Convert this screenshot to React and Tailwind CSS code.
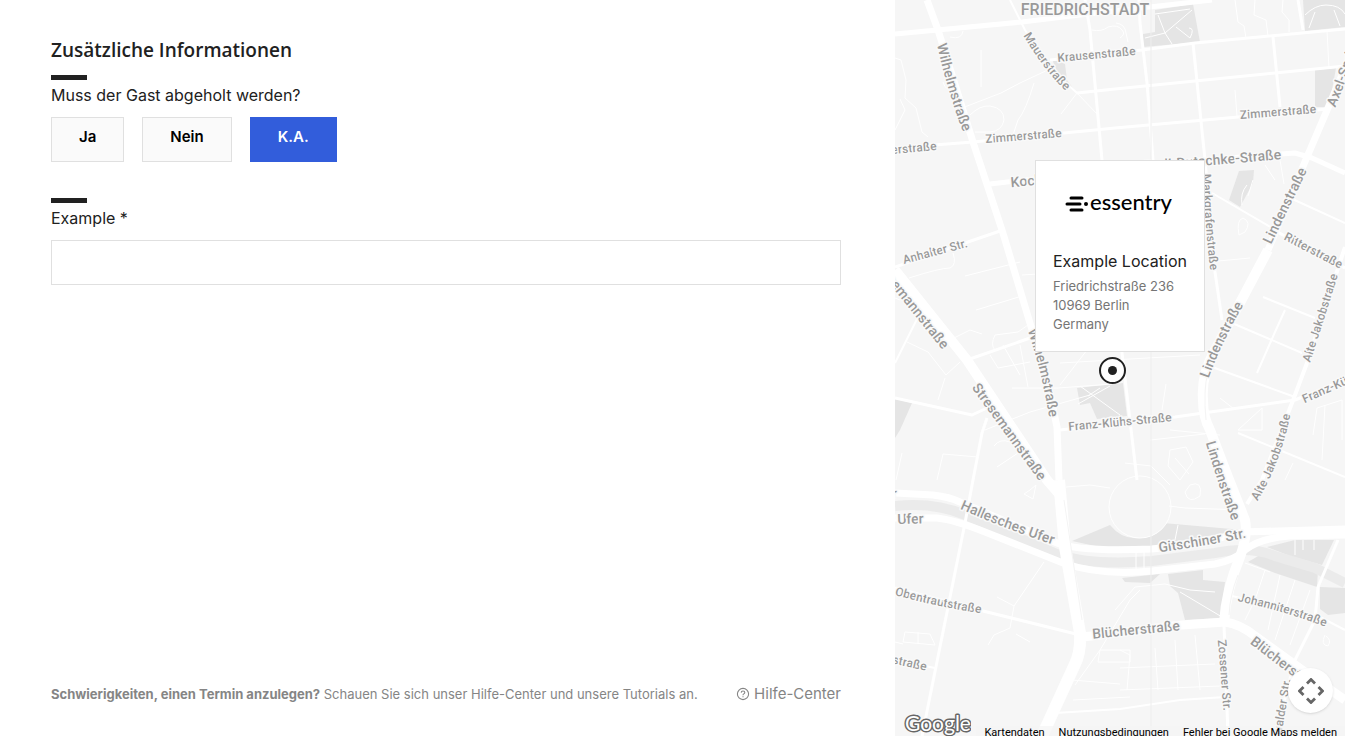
import { useState } from 'react';

const PARKS = [
  'M1155 10 L1193 4 L1200 42 L1143 47 L1143 34 L1155 32 Z',
  'M1303 0 H1345 V27 L1305 31 Z',
  'M1315 70 L1336 68 L1329 107 L1315 107 Z',
  'M1239 171 L1254 170 L1253 183 L1240 207 L1229 200 Z',
  'M1052 59 L1065 64 L1067 80 L1075 91 L1057 72 Z',
  'M1077 388 L1123 383 L1127 416 L1097 419 L1090 403 L1080 405 Z',
  'M895 399 L912 403 L900 430 L895 438 Z',
  'M1072 541 L1110 525 Q1122 540 1140 538 Q1155 536 1163 523 L1243 530 L1150 546 L1100 547 Z',
  'M1168 574 L1203 570 V580 L1225 582 L1221 618 L1185 620 L1178 593 L1170 586 Z',
  'M1267 547 L1295 540 H1334 L1322 565 L1290 556 Z',
  'M1248 562 L1265 552 L1318 570 L1317 587 L1275 573 Z',
  'M1320 587 L1345 588 V613 L1328 615 L1320 609 Z',
  'M1122 578 L1160 574 L1150 583 L1125 582 Z',
];

// [width, path]
const ROADS = [
  [1, 'M895 58 L901 60 L906 80 L905 98 L916 108 L922 132 L928 137'],
  [1, 'M981 50 V87 M962 108 L1001 93 L1020 83 L1052 68 M1034 83 Q1026 110 1018 120 L1012 138'],
  [1, 'M970 115 Q980 105 990 106 Q1004 108 1004 120 Q1002 131 990 132 L975 132'],
  [1, 'M900 99 L905 110 L895 130 M943 82 Q946 92 952 88 M950 37 Q962 40 963 31'],
  [1, 'M1092 30 Q1102 32 1108 27 Q1118 24 1122 30 Q1126 34 1120 38'],
  [1, 'M1077 93 L1061 114 M1077 93 L1098 115'],
  [1, 'M1235 0 L1238 22 L1244 26 L1246 38 M1255 0 L1254 15 L1266 20 L1268 36 M1283 0 L1282 12 L1289 20 V32'],
  [1, 'M1235 90 L1237 116 M1327 31 L1329 68 M1116 23 Q1125 24 1126 33 L1128 42'],
  [1, 'M1155 14 L1190 9 M1145 38 L1165 33 L1192 10 M1165 33 L1172 44 M1165 33 L1158 15 M1176 27 L1190 38 Q1195 28 1189 28'],
  [1, 'M1305 15 Q1315 5 1326 5 Q1340 5 1345 14 M1309 28 L1315 12 M1340 26 L1334 10'],
  [1, 'M1247 185 Q1240 193 1242 205 M1253 180 L1248 196 M1265 165 L1275 180 M1280 160 L1284 184'],
  [1, 'M1239 235 Q1236 220 1243 218 Q1252 222 1245 232 Z'],
  [1, 'M909 278 Q940 268 950 268 Q957 265 953 253 M965 276 L1020 262 M976 310 L1022 296'],
  [1, 'M950 340 L970 330 L982 334 M995 350 Q990 345 995 335 L1018 332 L1028 325 M990 355 L998 368 L1030 362'],
  [1, 'M907 342 L928 352 L946 375 L960 362 M945 378 L938 400 M985 430 L1030 412 L1090 395'],
  [1, 'M1003 345 L1020 375 M1020 345 L1028 387 M1012 388 L1058 388 L1112 384'],
  [1, 'M937 480 L943 454 L978 457 M994 446 Q1000 438 1010 442 M997 467 L1030 445 M902 453 L896 480'],
  [1, 'M1060 363 L1200 355 M1060 385 L1087 350 M1166 384 L1162 410 M1150 440 L1205 434 M1170 430 L1220 435'],
  [1, 'M1088 396 L1100 388 M1080 386 L1120 415 M1078 404 L1110 386'],
  [1, 'M1238 430 L1262 408 V430 Z M1220 398 L1234 409 M1285 480 L1293 463 M1313 435 L1317 408 L1342 400 V440 M1325 405 L1322 460'],
  [1, 'M1170 450 L1186 447 L1193 462 L1180 480 L1168 466 Z M1175 458 L1189 474 M1190 485 Q1203 480 1200 496 Q1188 505 1185 492 Z'],
  [1, 'M1066 487 L1090 485 L1110 488 M1169 506 L1185 508 L1243 510 M1125 463 L1151 466 L1170 485'],
  [1, 'M1030 490 L1036 485 L1033 499 L1024 494 Z M1044 562 L1014 606 L1010 628 L994 635 L988 645 M997 597 L1014 606 M1016 634 L1030 642'],
  [1, 'M905 632 L930 634 L935 645 L903 642 Z M918 632 V644 M895 642 L903 644'],
  [1, 'M1075 685 L1100 650 L1130 600 L1140 590 M1072 680 L1120 684 M1073 700 L1130 697 M1100 650 H1130 V662 H1098 Z'],
  [1, 'M1120 650 L1130 655 L1127 690 M1155 648 L1158 690 M1175 640 L1178 690 M1195 635 L1200 690 M1120 668 L1215 664 M1120 690 L1220 686'],
  [1, 'M1115 610 L1135 587 L1165 584 L1190 590 L1215 592 M1180 592 L1222 617'],
  [1, 'M1265 570 L1255 600 L1245 620 M1280 575 L1268 630 M1295 580 L1275 640 M1310 590 L1290 645 M1245 563 L1270 572'],
  [1, 'M1303 540 V550 M1314 540 V550 M1295 540 V555 M1325 635 Q1320 645 1328 646 Q1332 640 1326 636'],
  [1, 'M1136 546 V570 M1144 546 V570 M1175 540 L1178 525'],
  [2, 'M1010 0 L1025 30 L1050 68 L1077 93'],
  [3, 'M1085 0 L1090 30 L1102 160 L1122 353 L1137 480'],
  [3, 'M1139 0 L1140 23 L1147 83 L1153 160'],
  [3, 'M1193 43 L1205 160 L1215 272 L1222 320'],
  [3, 'M1273 37 L1280 107'],
  [3, 'M1298 0 L1303 30'],
  [5, 'M895 34 L1022 22 L1105 12 L1212 0'],
  [3, 'M1050 60 L1142 50 L1195 43 L1345 29'],
  [3, 'M1077 93 L1115 89 L1275 73 L1345 66'],
  [3, 'M895 148 L973 142 L1115 128 L1328 109'],
  [5, 'M990 184 L1200 160 L1295 153 L1312 158 L1345 173'],
  [3, 'M895 267 L1000 231'],
  [1, 'M1022 275 L1100 270 M1208 262 L1250 258 M900 300 L895 298'],
  [2, 'M1212 193 L1272 228 M1288 197 L1345 223'],
  [3, 'M895 398 L972 415 L987 408 M1033 337 L967 360'],
  [2, 'M920 313 L895 363'],
  [3, 'M987 418 L982 433 L973 480 L965 523 L922 736'],
  [3, 'M1270 228 L1345 268'],
  [4, 'M1345 247 L1307 363 L1292 403 L1262 480 L1247 504'],
  [3, 'M1060 430 L1175 417 L1295 400 L1345 380'],
  [2, 'M1212 367 L1295 397 M1232 323 L1302 353 M1263 297 L1315 318 M1285 310 L1275 332 L1257 373'],
  [2, 'M1238 433 L1345 477'],
  [3, 'M895 588 L983 611 L1080 635'],
  [2, 'M895 660 L935 668 M1055 713 L1120 709 L1180 700 L1225 697'],
  [3, 'M1224 625 L1228 736'],
  [3, 'M1338 540 L1318 587 L1315 620 L1295 660 L1275 736'],
  [2, 'M1228 595 L1320 617 L1345 630'],
  [7, 'M927 0 L938 30 L973 142 L1002 230 L1030 323 L1047 380 L1057 427 L1059 480'],
  [12, 'M1059 480 L1065 547 L1080 633 Q1081 652 1075 664 L1042 736'],
  [10, 'M895 270 L967 360 L1047 480 L1060 495'],
  [7, 'M1345 68 L1307 157 L1268 250'],
  [10, 'M1268 250 L1215 350 Q1201 375 1203 400 Q1203 417 1210 430 L1228 477 L1245 520 Q1248 535 1240 557 Q1226 590 1224 623'],
  [7, 'M895 493 L933 495 Q950 497 960 502 L1057 543 Q1080 552 1152 549 Q1200 545 1242 532 L1345 529'],
  [7, 'M895 518 H937 Q955 520 985 532 L1063 563 Q1100 576 1152 571 L1215 564 Q1235 560 1245 550 Q1260 538 1290 536 L1345 535'],
  [9, 'M1083 637 L1182 625 L1225 622 Q1240 624 1255 636 L1302 670 L1345 700'],
];

const LABELS = [
  ['Wilhelmstraße', 14, 'M939 30 Q951 90 973 143'],
  ['Mauerstraße', 12, 'M1021 23 Q1045 68 1077 96'],
  ['Krausenstraße', 12, 'M1046 59 L1147 50'],
  ['Zimmerstraße', 12, 'M974 140 L1073 132'],
  ['Zimmerstraße', 12, 'M1229 116 L1327 108'],
  ['Zimmerstraße', 12, 'M850 154 L947 145'],
  ['Kochstraße', 14, 'M1001 183 L1092 175'],
  ['Rudi-Dutschke-Straße', 14, 'M1131 167 L1294 153'],
  ['Markgrafenstraße', 12, 'M1206 160 Q1208 220 1216 284'],
  ['Lindenstraße', 14, 'M1261 254 L1308 157'],
  ['Axel-Springer-Straße', 14, 'M1326 116 Q1345 75 1375 -30'],
  ['Ritterstraße', 12, 'M1276 231 L1351 270'],
  ['Alte Jakobstraße', 12, 'M1302 374 Q1320 320 1338 261'],
  ['Anhalter Str.', 12, 'M892 263 L978 240'],
  ['Stresemannstraße', 14, 'M867 248 L953 355'],
  ['Stresemannstraße', 14, 'M967 373 L1052 490'],
  ['Wilhelmstraße', 14, 'M1028 316 Q1048 370 1056 430'],
  ['Franz-Klühs-Straße', 12, 'M1056 428 L1184 416'],
  ['Lindenstraße', 14, 'M1200 389 Q1213 345 1246 291'],
  ['Lindenstraße', 14, 'M1207 429 Q1223 485 1241 531'],
  ['Franz-Künstler-Straße', 12, 'M1293 404 L1421 347'],
  ['Alte Jakobstraße', 12, 'M1247 510 Q1278 465 1289 401'],
  ['Hallesches Ufer', 14, 'M950 499 Q1005 524 1067 544'],
  ['Hallesches Ufer', 14, 'M786 494 L909 493'],
  ['Tempelhofer Ufer', 14, 'M804 522 L934 518'],
  ['Obentrautstraße', 12, 'M885 588 Q935 603 993 611'],
  ['Hagelberger straße', 12, 'M820 643 L932 668'],
  ['Gitschiner Str.', 14, 'M1146 549 Q1202 542 1258 530'],
  ['Blücherstraße', 14, 'M1080 635 L1192 624'],
  ['Johanniterstraße', 12, 'M1227 595 Q1285 606 1337 627'],
  ['Blücherstraße', 14, 'M1243 632 L1332 700'],
  ['Zossener Str.', 12, 'M1221 630 Q1225 675 1228 720'],
  ['Baerwalder Str.', 12, 'M1272 765 L1288 673'],
];

const CityMap = () => (
  <svg
    viewBox="895 0 450 736"
    preserveAspectRatio="xMidYMin slice"
    className="absolute inset-0 h-full w-full"
    aria-hidden="true"
  >
    <rect x="595" y="0" width="1050" height="736" fill="#f6f6f6" />
    {PARKS.map((d) => (
      <path key={d} d={d} fill="#e5e5e5" />
    ))}
    <circle cx="1140" cy="507" r="31" fill="#f6f6f6" stroke="#fff" />
    {/* Landwehrkanal */}
    <path
      d="M895 506 Q935 502 965 515 L1057 554 Q1090 566 1152 561 L1215 553 Q1250 546 1275 556 L1315 568 L1345 583"
      fill="none"
      stroke="#ebebeb"
      strokeWidth="10"
    />
    {ROADS.map(([width, d]) => (
      <path key={d} d={d} fill="none" stroke="#fff" strokeWidth={width} strokeLinejoin="round" />
    ))}
    <path
      d="M1064 500 L1071 547 L1082 620 M1208 372 Q1203 390 1206 420 M1238 575 Q1230 595 1229 615"
      fill="none"
      stroke="#f4f4f4"
    />
    <path d="M1151 0 V736" stroke="#eee" />

    <g
      className="font-['Roboto',sans-serif] font-medium"
      fill="#999"
      stroke="#f9f9f9"
      strokeWidth="3"
      strokeLinejoin="round"
      paintOrder="stroke"
      textAnchor="middle"
    >
      <text x="1085" y="15" fontSize="16">
        FRIEDRICHSTADT
      </text>
      {LABELS.map(([name, size, d], i) => (
        <g key={i}>
          <path id={`street-${i}`} d={d} fill="none" stroke="none" />
          <text fontSize={size} dy={size === 14 ? 5 : 4}>
            <textPath href={`#street-${i}`} startOffset="50%">
              {name}
            </textPath>
          </text>
        </g>
      ))}
    </g>
  </svg>
);

const EssentryLogo = () => (
  <svg width="112" height="28" viewBox="0 0 112 28" role="img" aria-label="essentry">
    <g stroke="#000" strokeWidth="3" strokeLinecap="round">
      <path d="M7 8 H18 M3 14 H16 M7 20 H18" />
    </g>
    <circle cx="22" cy="14" r="2" />
    <text x="26" y="20" fontSize="22" className="font-['Lato',sans-serif] font-medium">
      essentry
    </text>
  </svg>
);

const LocationCard = () => (
  <div className="absolute top-40 left-1/2 h-48 w-[170px] -translate-x-1/2 border border-[#e0e0e0] bg-white px-[17px] pt-[29px]">
    <div className="flex justify-center">
      <EssentryLogo />
    </div>
    <h2 className="mt-[31px] text-base leading-6 whitespace-nowrap text-[#212121]">Example Location</h2>
    <address className="mt-1 text-[13px] leading-[19px] whitespace-nowrap text-[#757575] not-italic">
      Friedrichstraße 236
      <br />
      10969 Berlin
      <br />
      Germany
    </address>
  </div>
);

const MapPanel = () => (
  <aside className="relative h-screen w-[450px] shrink-0 overflow-hidden bg-[#f6f6f6]">
    <CityMap />
    <LocationCard />

    {/* Pin */}
    <svg className="absolute top-[356px] left-[203px]" width="29" height="29" viewBox="0 0 29 29" aria-hidden="true">
      <circle cx="14.5" cy="14.5" r="12.5" fill="#fff" stroke="#212121" strokeWidth="2" />
      <circle cx="14.5" cy="14.5" r="4.5" fill="#212121" />
    </svg>

    <button
      aria-label="Kamerasteuerung"
      className="absolute right-3 bottom-[23px] flex size-[45px] items-center justify-center rounded-full bg-white shadow"
    >
      <svg width="26" height="26" viewBox="0 0 26 26" fill="none" stroke="#666" strokeWidth="2.8">
        <path d="M9 5.5 L13 1.5 L17 5.5 M9 20.5 L13 24.5 L17 20.5 M5.5 9 L1.5 13 L5.5 17 M20.5 9 L24.5 13 L20.5 17" />
      </svg>
    </button>

    <a href="#google" className="absolute bottom-0 left-2">
      <svg width="68" height="26" viewBox="0 0 68 26">
        <text
          x="2"
          y="21"
          fontSize="21"
          fill="#fff"
          stroke="#666"
          strokeWidth="3"
          strokeLinejoin="round"
          paintOrder="stroke"
          className="font-['Lato',sans-serif] font-normal"
        >
          Google
        </text>
      </svg>
    </a>

    <div className="absolute right-0 -bottom-1 flex h-[14px] items-center gap-[14px] bg-[#f5f5f5]/70 px-2 font-['Roboto',sans-serif] text-[11px] leading-[14px] whitespace-nowrap text-black">
      <button>Kartendaten</button>
      <a href="#terms">Nutzungsbedingungen</a>
      <a href="#report">Fehler bei Google Maps melden</a>
    </div>
  </aside>
);

const OPTIONS = [
  { label: 'Ja', value: 'yes' },
  { label: 'Nein', value: 'no' },
  { label: 'K.A.', value: 'na' },
];

const Marker = () => <div className="h-[5px] w-9 bg-[#212121]" />;

const Footer = () => (
  <footer className="mt-auto flex items-center justify-between gap-4 text-[#858585]">
    <p className="text-[13px] leading-5">
      <b className="font-bold">Schwierigkeiten, einen Termin anzulegen?</b> Schauen Sie sich unser Hilfe-Center und
      unsere Tutorials an.
    </p>
    <a href="#help" className="flex shrink-0 items-center gap-1 text-[15px] leading-5">
      <svg width="14" height="14" viewBox="0 0 14 14" fill="none" stroke="currentColor" strokeWidth="1.1">
        <circle cx="7" cy="7" r="5.6" />
        <path d="M5.2 5.6 Q5.3 4 7 4 Q8.8 4 8.8 5.5 Q8.8 6.3 7.8 6.9 Q7 7.4 7 8.2 M7 9.2 V10.3" />
      </svg>
      Hilfe-Center
    </a>
  </footer>
);

const App = () => {
  const [pickup, setPickup] = useState('na');

  return (
    <div className="flex min-h-screen bg-white font-['Inter',sans-serif] text-[#212121]">
      <main className="flex min-w-0 flex-1 flex-col pt-9 pr-[54px] pb-8 pl-[51px]">
        <h1 className="font-['Open_Sans',sans-serif] text-[19px] leading-7 font-semibold">
          Zusätzliche Informationen
        </h1>

        <section className="mt-[11px]">
          <Marker />
          <p id="pickup-label" className="mt-[3px] text-base leading-6">
            Muss der Gast abgeholt werden?
          </p>
          <div role="group" aria-labelledby="pickup-label" className="mt-[10px] flex gap-[18px]">
            {OPTIONS.map((option) => (
              <button
                key={option.value}
                aria-pressed={pickup === option.value}
                onClick={() => setPickup(option.value)}
                className={`h-[45px] border px-[27px] pb-1 text-[15px] font-semibold ${
                  pickup === option.value
                    ? 'border-[#325ddb] bg-[#325ddb] text-white'
                    : 'border-[#e0e0e0] bg-[#fafafa] text-black'
                }`}
              >
                {option.label}
              </button>
            ))}
          </div>
        </section>

        <section className="mt-9">
          <Marker />
          <label htmlFor="example" className="mt-[3px] block text-base leading-6">
            Example *
          </label>
          <input
            id="example"
            type="text"
            required
            className="mt-[10px] block h-[45px] w-full border border-[#e0e0e0] px-4 text-base outline-none"
          />
        </section>

        <Footer />
      </main>

      <MapPanel />
    </div>
  );
};

export default App;
